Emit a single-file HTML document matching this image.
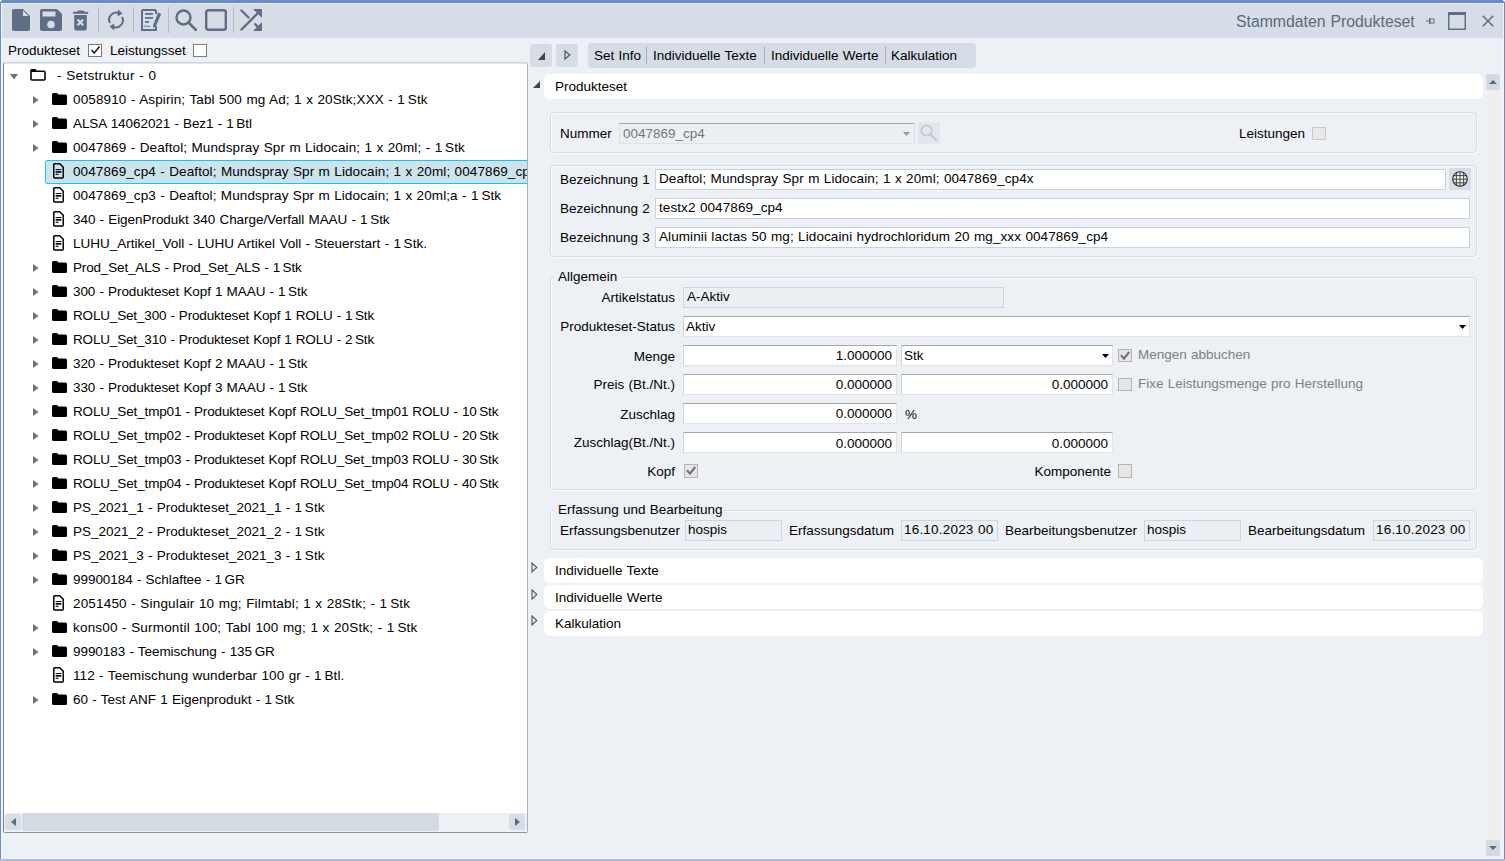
<!DOCTYPE html><html><head><meta charset='utf-8'><style>
*{box-sizing:border-box}
html,body{margin:0;padding:0}
body{width:1505px;height:861px;overflow:hidden;position:relative;background:#edf0f5;font-family:"Liberation Sans", sans-serif;font-size:13.5px;letter-spacing:0;word-spacing:.5px;color:#000}
.a{position:absolute}
.t{position:absolute;white-space:pre;line-height:16px;margin-top:1px}
.ic{position:absolute;display:block}
.inp{position:absolute;background:#fff;border:1px solid #c6d2e0}
.dis{background:#ebeef3;border:1px solid #c9d5e4}
.sunk{border-top-color:#a6a6a6;border-left-color:#c8d0c8;border-right-color:#dfe5ea;border-bottom-color:#dfe5ea}
.grp{position:absolute;border:1px solid #d3dde8;border-radius:4px;box-shadow:inset 1px 1px 0 #fafbfd,1px 1px 0 #fafbfd}
.sec{position:absolute;background:#fff;border-radius:6px}
.cb{position:absolute;width:14px;height:14px;border:1px solid #7a7a7a;background:#fff}
.cbd{position:absolute;width:14px;height:14px;border:1px solid #c8c8c8;background:#e8e8e8}
</style></head><body><div class='a' style='left:0;top:0;width:1505px;height:3px;background:#6a8cc4'></div><div class='a' style='left:0;top:0;width:1px;height:861px;background:#6a8cc4'></div><div class='a' style='left:1504px;top:0;width:1px;height:861px;background:#6a8cc4'></div><div class='a' style='left:0;top:859px;width:1505px;height:2px;background:#a9bcd8'></div><div class='a' style='left:1px;top:3px;width:1503px;height:1px;background:#e4e9ef'></div><div class='a' style='left:1px;top:3px;width:1px;height:856px;background:#f4f6f9'></div><div class='a' style='left:1503px;top:3px;width:1px;height:856px;background:#f4f6f9'></div><div class='a' style='left:0;top:0;width:2px;height:1px;background:#fff'></div><div class='a' style='left:0;top:1px;width:1px;height:1px;background:#c9d6ea'></div><div class='a' style='left:1503px;top:0;width:2px;height:1px;background:#fff'></div><div class='a' style='left:1504px;top:1px;width:1px;height:1px;background:#c9d6ea'></div><div class='a' style='left:2px;top:4px;width:1501px;height:34px;background:#d6dde6'></div><svg class='ic' style='left:12px;top:9px' width='18' height='22' viewBox='0 0 18 22'><path d='M2 0 H11 L18 7 V20 A2 2 0 0 1 16 22 H2 A2 2 0 0 1 0 20 V2 A2 2 0 0 1 2 0Z' fill='#5e6e84'/><path d='M11 1.5 V7 H16.5Z' fill='#d6dde6'/></svg><svg class='ic' style='left:40px;top:9px' width='22' height='22' viewBox='0 0 22 22'><path d='M2 0 H17 L22 5 V20 A2 2 0 0 1 20 22 H2 A2 2 0 0 1 0 20 V2 A2 2 0 0 1 2 0Z' fill='#5e6e84'/><rect x='2.5' y='2.5' width='13' height='5' fill='#d6dde6'/><circle cx='11' cy='15.5' r='3.8' fill='#d6dde6'/></svg><svg class='ic' style='left:73px;top:10px' width='16' height='21' viewBox='0 0 16 21'><rect x='0' y='1.8' width='15.2' height='2' fill='#5e6e84'/><rect x='4.2' y='0.6' width='7' height='2' rx='1' fill='#5e6e84'/><path d='M1.2 5 H13.8 V18.5 A2 2 0 0 1 11.8 20.5 H3.2 A2 2 0 0 1 1.2 18.5Z' fill='#5e6e84'/><path d='M4.6 9.5 L10.2 15.2 M10.2 9.5 L4.6 15.2' stroke='#d6dde6' stroke-width='2'/></svg><div class='a' style='left:98px;top:7px;width:1px;height:26px;background:#b4bcc6'></div><div class='a' style='left:133px;top:7px;width:1px;height:26px;background:#b4bcc6'></div><div class='a' style='left:168px;top:7px;width:1px;height:26px;background:#b4bcc6'></div><div class='a' style='left:233px;top:7px;width:1px;height:26px;background:#b4bcc6'></div><svg class='ic' style='left:107px;top:9px' width='18' height='22' viewBox='0 0 18 22'><path d='M3 14 A7 7 0 0 1 12.5 4.5' fill='none' stroke='#5e6e84' stroke-width='2'/><path d='M15 8 A7 7 0 0 1 5.5 17.5' fill='none' stroke='#5e6e84' stroke-width='2'/><path d='M11 0.5 L15.5 4.5 L10.5 7.5Z' fill='#5e6e84'/><path d='M7 14.5 L2.5 17.5 L7.5 21.5Z' fill='#5e6e84'/></svg><svg class='ic' style='left:141px;top:9px' width='20' height='22' viewBox='0 0 20 22'><path d='M1 1 H15 M1 1 V21 H15 V17' fill='none' stroke='#5e6e84' stroke-width='2'/><path d='M15 1 V5' stroke='#5e6e84' stroke-width='2'/><rect x='4' y='4' width='8' height='1.8' fill='#5e6e84'/><rect x='4' y='8' width='8' height='1.8' fill='#5e6e84'/><rect x='4' y='12' width='4' height='1.8' fill='#5e6e84'/><path d='M17.2 3.5 L20.2 5 L14.8 17.2 L12 19 L12.2 15.8Z' fill='#5e6e84'/><path d='M3 18 C5 15 6 19 9 17' fill='none' stroke='#5e6e84' stroke-width='1'/></svg><svg class='ic' style='left:175px;top:9px' width='22' height='22' viewBox='0 0 22 22'><circle cx='8.5' cy='8.5' r='7' fill='none' stroke='#5e6e84' stroke-width='2.4'/><path d='M13.5 13.5 L21 21' stroke='#5e6e84' stroke-width='2.6' stroke-linecap='round'/></svg><svg class='ic' style='left:205px;top:9px' width='22' height='22' viewBox='0 0 22 22'><rect x='1.2' y='1.2' width='19.6' height='19.6' rx='2' fill='none' stroke='#5e6e84' stroke-width='2.4'/></svg><svg class='ic' style='left:240px;top:9px' width='23' height='22' viewBox='0 0 23 22'><path d='M1.5 1.5 L8.5 8.5' stroke='#5e6e84' stroke-width='2.4' stroke-linecap='round'/><path d='M1.5 20.5 L20 2' stroke='#5e6e84' stroke-width='2.4' stroke-linecap='round'/><path d='M14.5 14.5 L20 20' stroke='#5e6e84' stroke-width='2.4'/><path d='M13 0 H22 V9Z' fill='#5e6e84'/><path d='M22 13 V22 H13Z' fill='#5e6e84'/></svg><div class='t' style='left:1236px;top:11px;font-size:15.8px;letter-spacing:0;color:#5b6a80;line-height:20px'>Stammdaten Produkteset</div><svg class='ic' style='left:1426px;top:17px' width='9' height='8' viewBox='0 0 9 8'><rect x='0' y='3.5' width='3' height='1' fill='#5e6e84'/><rect x='3' y='1' width='1.2' height='6' fill='#5e6e84'/><rect x='4' y='2' width='4' height='4' fill='none' stroke='#5e6e84' stroke-width='1'/></svg><svg class='ic' style='left:1448px;top:12px' width='19' height='18' viewBox='0 0 19 18'><rect x='0.75' y='0.75' width='16.5' height='16.5' fill='none' stroke='#5e6e84' stroke-width='1.5'/><rect x='0' y='0' width='18' height='3' fill='#5e6e84'/></svg><svg class='ic' style='left:1482px;top:15px' width='12' height='12' viewBox='0 0 12 12'><path d='M0.8 0.8 L11.2 11.2 M11.2 0.8 L0.8 11.2' stroke='#5e6e84' stroke-width='1.6'/></svg><div class='t' style='left:8px;top:42px'>Produkteset</div><div class='cb' style='left:88px;top:44px;height:13px'></div><svg class='ic' style='left:90px;top:45px' width='11' height='10' viewBox='0 0 11 10'><path d='M1.5 5 L4.2 8 L9.5 1.5' fill='none' stroke='#222' stroke-width='1.6'/></svg><div class='t' style='left:110px;top:42px'>Leistungsset</div><div class='cb' style='left:193px;top:44px;height:13px'></div><div class='a' style='left:3px;top:62px;width:525px;height:771px;background:#fff;border:1px solid #8797a6;border-top-color:#ccd4dd;border-left-color:#74879a;border-right-color:#a3b0bd;border-radius:2px;overflow:hidden'><div class='a' style='left:0;top:0;width:523px;height:1px;background:#dfe5eb'></div><svg class='ic' style='left:6px;top:11px' width='8' height='6' viewBox='0 0 8 6'><path d='M0 0 H8 L4 5.5Z' fill='#707070'/></svg><svg class='ic' style='left:26px;top:6px' width='16' height='12' viewBox='0 0 16 12'><path d='M1.5 0.9 H5 L6.3 2.2 H14 A1 1 0 0 1 15 3.2 V10 A1 1 0 0 1 14 11 H2 A1 1 0 0 1 1 10 V1.5Z' fill='none' stroke='#000' stroke-width='1.6'/><rect x='1' y='0.5' width='5' height='2.5' fill='#000'/></svg><div class='t' style='left:53px;top:4px;letter-spacing:.28px'>- Setstruktur - 0</div><svg class='ic' style='left:29px;top:33px' width='6' height='8' viewBox='0 0 6 8'><path d='M0 0 L5.5 4 L0 8Z' fill='#707070'/></svg><svg class='ic' style='left:47.5px;top:30px' width='15' height='12' viewBox='0 0 15 12'><path d='M1.5 0 H5 L6.5 1.5 H13.5 A1.5 1.5 0 0 1 15 3 V10.5 A1.5 1.5 0 0 1 13.5 12 H1.5 A1.5 1.5 0 0 1 0 10.5 V1.5 A1.5 1.5 0 0 1 1.5 0Z' fill='#000'/></svg><div class='t' style='left:69px;top:28px;letter-spacing:0.135px'>0058910 - Aspirin; Tabl 500 mg Ad; 1 x 20Stk;XXX - 1 Stk</div><svg class='ic' style='left:29px;top:57px' width='6' height='8' viewBox='0 0 6 8'><path d='M0 0 L5.5 4 L0 8Z' fill='#707070'/></svg><svg class='ic' style='left:47.5px;top:54px' width='15' height='12' viewBox='0 0 15 12'><path d='M1.5 0 H5 L6.5 1.5 H13.5 A1.5 1.5 0 0 1 15 3 V10.5 A1.5 1.5 0 0 1 13.5 12 H1.5 A1.5 1.5 0 0 1 0 10.5 V1.5 A1.5 1.5 0 0 1 1.5 0Z' fill='#000'/></svg><div class='t' style='left:69px;top:52px;letter-spacing:-0.069px'>ALSA 14062021 - Bez1 - 1 Btl</div><svg class='ic' style='left:29px;top:81px' width='6' height='8' viewBox='0 0 6 8'><path d='M0 0 L5.5 4 L0 8Z' fill='#707070'/></svg><svg class='ic' style='left:47.5px;top:78px' width='15' height='12' viewBox='0 0 15 12'><path d='M1.5 0 H5 L6.5 1.5 H13.5 A1.5 1.5 0 0 1 15 3 V10.5 A1.5 1.5 0 0 1 13.5 12 H1.5 A1.5 1.5 0 0 1 0 10.5 V1.5 A1.5 1.5 0 0 1 1.5 0Z' fill='#000'/></svg><div class='t' style='left:69px;top:76px;letter-spacing:0.114px'>0047869 - Deaftol; Mundspray Spr m Lidocain; 1 x 20ml; - 1 Stk</div><div class='a' style='left:41px;top:97px;width:500px;height:24px;background:#cce3ec;border:1px solid #12c6f5;border-radius:2px'></div><svg class='ic' style='left:49px;top:100px' width='11' height='16' viewBox='0 0 11 16'><path d='M0.75 1.6 Q0.75 0.75 1.6 0.75 H6.8 L10.25 4.2 V14.1 Q10.25 14.95 9.4 14.95 H1.6 Q0.75 14.95 0.75 14.1 Z' fill='none' stroke='#000' stroke-width='1.5'/><rect x='2.6' y='6.1' width='5.8' height='1' fill='#000'/><rect x='2.6' y='8.1' width='5.8' height='1.6' fill='#000'/><rect x='2.6' y='10.7' width='3' height='1.1' fill='#000'/></svg><div class='t' style='left:69px;top:100px;letter-spacing:0.1px'>0047869_cp4 - Deaftol; Mundspray Spr m Lidocain; 1 x 20ml; 0047869_cp4x - 1 Stk</div><svg class='ic' style='left:49px;top:124px' width='11' height='16' viewBox='0 0 11 16'><path d='M0.75 1.6 Q0.75 0.75 1.6 0.75 H6.8 L10.25 4.2 V14.1 Q10.25 14.95 9.4 14.95 H1.6 Q0.75 14.95 0.75 14.1 Z' fill='none' stroke='#000' stroke-width='1.5'/><rect x='2.6' y='6.1' width='5.8' height='1' fill='#000'/><rect x='2.6' y='8.1' width='5.8' height='1.6' fill='#000'/><rect x='2.6' y='10.7' width='3' height='1.1' fill='#000'/></svg><div class='t' style='left:69px;top:124px;letter-spacing:0.097px'>0047869_cp3 - Deaftol; Mundspray Spr m Lidocain; 1 x 20ml;a - 1 Stk</div><svg class='ic' style='left:49px;top:148px' width='11' height='16' viewBox='0 0 11 16'><path d='M0.75 1.6 Q0.75 0.75 1.6 0.75 H6.8 L10.25 4.2 V14.1 Q10.25 14.95 9.4 14.95 H1.6 Q0.75 14.95 0.75 14.1 Z' fill='none' stroke='#000' stroke-width='1.5'/><rect x='2.6' y='6.1' width='5.8' height='1' fill='#000'/><rect x='2.6' y='8.1' width='5.8' height='1.6' fill='#000'/><rect x='2.6' y='10.7' width='3' height='1.1' fill='#000'/></svg><div class='t' style='left:69px;top:148px;letter-spacing:-0.051px'>340 - EigenProdukt 340 Charge/Verfall MAAU - 1 Stk</div><svg class='ic' style='left:49px;top:172px' width='11' height='16' viewBox='0 0 11 16'><path d='M0.75 1.6 Q0.75 0.75 1.6 0.75 H6.8 L10.25 4.2 V14.1 Q10.25 14.95 9.4 14.95 H1.6 Q0.75 14.95 0.75 14.1 Z' fill='none' stroke='#000' stroke-width='1.5'/><rect x='2.6' y='6.1' width='5.8' height='1' fill='#000'/><rect x='2.6' y='8.1' width='5.8' height='1.6' fill='#000'/><rect x='2.6' y='10.7' width='3' height='1.1' fill='#000'/></svg><div class='t' style='left:69px;top:172px;letter-spacing:0.01px'>LUHU_Artikel_Voll - LUHU Artikel Voll - Steuerstart - 1 Stk.</div><svg class='ic' style='left:29px;top:201px' width='6' height='8' viewBox='0 0 6 8'><path d='M0 0 L5.5 4 L0 8Z' fill='#707070'/></svg><svg class='ic' style='left:47.5px;top:198px' width='15' height='12' viewBox='0 0 15 12'><path d='M1.5 0 H5 L6.5 1.5 H13.5 A1.5 1.5 0 0 1 15 3 V10.5 A1.5 1.5 0 0 1 13.5 12 H1.5 A1.5 1.5 0 0 1 0 10.5 V1.5 A1.5 1.5 0 0 1 1.5 0Z' fill='#000'/></svg><div class='t' style='left:69px;top:196px;letter-spacing:-0.164px'>Prod_Set_ALS - Prod_Set_ALS - 1 Stk</div><svg class='ic' style='left:29px;top:225px' width='6' height='8' viewBox='0 0 6 8'><path d='M0 0 L5.5 4 L0 8Z' fill='#707070'/></svg><svg class='ic' style='left:47.5px;top:222px' width='15' height='12' viewBox='0 0 15 12'><path d='M1.5 0 H5 L6.5 1.5 H13.5 A1.5 1.5 0 0 1 15 3 V10.5 A1.5 1.5 0 0 1 13.5 12 H1.5 A1.5 1.5 0 0 1 0 10.5 V1.5 A1.5 1.5 0 0 1 1.5 0Z' fill='#000'/></svg><div class='t' style='left:69px;top:220px;letter-spacing:-0.079px'>300 - Produkteset Kopf 1 MAAU - 1 Stk</div><svg class='ic' style='left:29px;top:249px' width='6' height='8' viewBox='0 0 6 8'><path d='M0 0 L5.5 4 L0 8Z' fill='#707070'/></svg><svg class='ic' style='left:47.5px;top:246px' width='15' height='12' viewBox='0 0 15 12'><path d='M1.5 0 H5 L6.5 1.5 H13.5 A1.5 1.5 0 0 1 15 3 V10.5 A1.5 1.5 0 0 1 13.5 12 H1.5 A1.5 1.5 0 0 1 0 10.5 V1.5 A1.5 1.5 0 0 1 1.5 0Z' fill='#000'/></svg><div class='t' style='left:69px;top:244px;letter-spacing:-0.165px'>ROLU_Set_300 - Produkteset Kopf 1 ROLU - 1 Stk</div><svg class='ic' style='left:29px;top:273px' width='6' height='8' viewBox='0 0 6 8'><path d='M0 0 L5.5 4 L0 8Z' fill='#707070'/></svg><svg class='ic' style='left:47.5px;top:270px' width='15' height='12' viewBox='0 0 15 12'><path d='M1.5 0 H5 L6.5 1.5 H13.5 A1.5 1.5 0 0 1 15 3 V10.5 A1.5 1.5 0 0 1 13.5 12 H1.5 A1.5 1.5 0 0 1 0 10.5 V1.5 A1.5 1.5 0 0 1 1.5 0Z' fill='#000'/></svg><div class='t' style='left:69px;top:268px;letter-spacing:-0.165px'>ROLU_Set_310 - Produkteset Kopf 1 ROLU - 2 Stk</div><svg class='ic' style='left:29px;top:297px' width='6' height='8' viewBox='0 0 6 8'><path d='M0 0 L5.5 4 L0 8Z' fill='#707070'/></svg><svg class='ic' style='left:47.5px;top:294px' width='15' height='12' viewBox='0 0 15 12'><path d='M1.5 0 H5 L6.5 1.5 H13.5 A1.5 1.5 0 0 1 15 3 V10.5 A1.5 1.5 0 0 1 13.5 12 H1.5 A1.5 1.5 0 0 1 0 10.5 V1.5 A1.5 1.5 0 0 1 1.5 0Z' fill='#000'/></svg><div class='t' style='left:69px;top:292px;letter-spacing:-0.079px'>320 - Produkteset Kopf 2 MAAU - 1 Stk</div><svg class='ic' style='left:29px;top:321px' width='6' height='8' viewBox='0 0 6 8'><path d='M0 0 L5.5 4 L0 8Z' fill='#707070'/></svg><svg class='ic' style='left:47.5px;top:318px' width='15' height='12' viewBox='0 0 15 12'><path d='M1.5 0 H5 L6.5 1.5 H13.5 A1.5 1.5 0 0 1 15 3 V10.5 A1.5 1.5 0 0 1 13.5 12 H1.5 A1.5 1.5 0 0 1 0 10.5 V1.5 A1.5 1.5 0 0 1 1.5 0Z' fill='#000'/></svg><div class='t' style='left:69px;top:316px;letter-spacing:-0.079px'>330 - Produkteset Kopf 3 MAAU - 1 Stk</div><svg class='ic' style='left:29px;top:345px' width='6' height='8' viewBox='0 0 6 8'><path d='M0 0 L5.5 4 L0 8Z' fill='#707070'/></svg><svg class='ic' style='left:47.5px;top:342px' width='15' height='12' viewBox='0 0 15 12'><path d='M1.5 0 H5 L6.5 1.5 H13.5 A1.5 1.5 0 0 1 15 3 V10.5 A1.5 1.5 0 0 1 13.5 12 H1.5 A1.5 1.5 0 0 1 0 10.5 V1.5 A1.5 1.5 0 0 1 1.5 0Z' fill='#000'/></svg><div class='t' style='left:69px;top:340px;letter-spacing:-0.139px'>ROLU_Set_tmp01 - Produkteset Kopf ROLU_Set_tmp01 ROLU - 10 Stk</div><svg class='ic' style='left:29px;top:369px' width='6' height='8' viewBox='0 0 6 8'><path d='M0 0 L5.5 4 L0 8Z' fill='#707070'/></svg><svg class='ic' style='left:47.5px;top:366px' width='15' height='12' viewBox='0 0 15 12'><path d='M1.5 0 H5 L6.5 1.5 H13.5 A1.5 1.5 0 0 1 15 3 V10.5 A1.5 1.5 0 0 1 13.5 12 H1.5 A1.5 1.5 0 0 1 0 10.5 V1.5 A1.5 1.5 0 0 1 1.5 0Z' fill='#000'/></svg><div class='t' style='left:69px;top:364px;letter-spacing:-0.139px'>ROLU_Set_tmp02 - Produkteset Kopf ROLU_Set_tmp02 ROLU - 20 Stk</div><svg class='ic' style='left:29px;top:393px' width='6' height='8' viewBox='0 0 6 8'><path d='M0 0 L5.5 4 L0 8Z' fill='#707070'/></svg><svg class='ic' style='left:47.5px;top:390px' width='15' height='12' viewBox='0 0 15 12'><path d='M1.5 0 H5 L6.5 1.5 H13.5 A1.5 1.5 0 0 1 15 3 V10.5 A1.5 1.5 0 0 1 13.5 12 H1.5 A1.5 1.5 0 0 1 0 10.5 V1.5 A1.5 1.5 0 0 1 1.5 0Z' fill='#000'/></svg><div class='t' style='left:69px;top:388px;letter-spacing:-0.139px'>ROLU_Set_tmp03 - Produkteset Kopf ROLU_Set_tmp03 ROLU - 30 Stk</div><svg class='ic' style='left:29px;top:417px' width='6' height='8' viewBox='0 0 6 8'><path d='M0 0 L5.5 4 L0 8Z' fill='#707070'/></svg><svg class='ic' style='left:47.5px;top:414px' width='15' height='12' viewBox='0 0 15 12'><path d='M1.5 0 H5 L6.5 1.5 H13.5 A1.5 1.5 0 0 1 15 3 V10.5 A1.5 1.5 0 0 1 13.5 12 H1.5 A1.5 1.5 0 0 1 0 10.5 V1.5 A1.5 1.5 0 0 1 1.5 0Z' fill='#000'/></svg><div class='t' style='left:69px;top:412px;letter-spacing:-0.139px'>ROLU_Set_tmp04 - Produkteset Kopf ROLU_Set_tmp04 ROLU - 40 Stk</div><svg class='ic' style='left:29px;top:441px' width='6' height='8' viewBox='0 0 6 8'><path d='M0 0 L5.5 4 L0 8Z' fill='#707070'/></svg><svg class='ic' style='left:47.5px;top:438px' width='15' height='12' viewBox='0 0 15 12'><path d='M1.5 0 H5 L6.5 1.5 H13.5 A1.5 1.5 0 0 1 15 3 V10.5 A1.5 1.5 0 0 1 13.5 12 H1.5 A1.5 1.5 0 0 1 0 10.5 V1.5 A1.5 1.5 0 0 1 1.5 0Z' fill='#000'/></svg><div class='t' style='left:69px;top:436px;letter-spacing:0.014px'>PS_2021_1 - Produkteset_2021_1 - 1 Stk</div><svg class='ic' style='left:29px;top:465px' width='6' height='8' viewBox='0 0 6 8'><path d='M0 0 L5.5 4 L0 8Z' fill='#707070'/></svg><svg class='ic' style='left:47.5px;top:462px' width='15' height='12' viewBox='0 0 15 12'><path d='M1.5 0 H5 L6.5 1.5 H13.5 A1.5 1.5 0 0 1 15 3 V10.5 A1.5 1.5 0 0 1 13.5 12 H1.5 A1.5 1.5 0 0 1 0 10.5 V1.5 A1.5 1.5 0 0 1 1.5 0Z' fill='#000'/></svg><div class='t' style='left:69px;top:460px;letter-spacing:0.014px'>PS_2021_2 - Produkteset_2021_2 - 1 Stk</div><svg class='ic' style='left:29px;top:489px' width='6' height='8' viewBox='0 0 6 8'><path d='M0 0 L5.5 4 L0 8Z' fill='#707070'/></svg><svg class='ic' style='left:47.5px;top:486px' width='15' height='12' viewBox='0 0 15 12'><path d='M1.5 0 H5 L6.5 1.5 H13.5 A1.5 1.5 0 0 1 15 3 V10.5 A1.5 1.5 0 0 1 13.5 12 H1.5 A1.5 1.5 0 0 1 0 10.5 V1.5 A1.5 1.5 0 0 1 1.5 0Z' fill='#000'/></svg><div class='t' style='left:69px;top:484px;letter-spacing:0.014px'>PS_2021_3 - Produkteset_2021_3 - 1 Stk</div><svg class='ic' style='left:29px;top:513px' width='6' height='8' viewBox='0 0 6 8'><path d='M0 0 L5.5 4 L0 8Z' fill='#707070'/></svg><svg class='ic' style='left:47.5px;top:510px' width='15' height='12' viewBox='0 0 15 12'><path d='M1.5 0 H5 L6.5 1.5 H13.5 A1.5 1.5 0 0 1 15 3 V10.5 A1.5 1.5 0 0 1 13.5 12 H1.5 A1.5 1.5 0 0 1 0 10.5 V1.5 A1.5 1.5 0 0 1 1.5 0Z' fill='#000'/></svg><div class='t' style='left:69px;top:508px;letter-spacing:-0.041px'>99900184 - Schlaftee - 1 GR</div><svg class='ic' style='left:49px;top:532px' width='11' height='16' viewBox='0 0 11 16'><path d='M0.75 1.6 Q0.75 0.75 1.6 0.75 H6.8 L10.25 4.2 V14.1 Q10.25 14.95 9.4 14.95 H1.6 Q0.75 14.95 0.75 14.1 Z' fill='none' stroke='#000' stroke-width='1.5'/><rect x='2.6' y='6.1' width='5.8' height='1' fill='#000'/><rect x='2.6' y='8.1' width='5.8' height='1.6' fill='#000'/><rect x='2.6' y='10.7' width='3' height='1.1' fill='#000'/></svg><div class='t' style='left:69px;top:532px;letter-spacing:0.179px'>2051450 - Singulair 10 mg; Filmtabl; 1 x 28Stk; - 1 Stk</div><svg class='ic' style='left:29px;top:561px' width='6' height='8' viewBox='0 0 6 8'><path d='M0 0 L5.5 4 L0 8Z' fill='#707070'/></svg><svg class='ic' style='left:47.5px;top:558px' width='15' height='12' viewBox='0 0 15 12'><path d='M1.5 0 H5 L6.5 1.5 H13.5 A1.5 1.5 0 0 1 15 3 V10.5 A1.5 1.5 0 0 1 13.5 12 H1.5 A1.5 1.5 0 0 1 0 10.5 V1.5 A1.5 1.5 0 0 1 1.5 0Z' fill='#000'/></svg><div class='t' style='left:69px;top:556px;letter-spacing:0.184px'>kons00 - Surmontil 100; Tabl 100 mg; 1 x 20Stk; - 1 Stk</div><svg class='ic' style='left:29px;top:585px' width='6' height='8' viewBox='0 0 6 8'><path d='M0 0 L5.5 4 L0 8Z' fill='#707070'/></svg><svg class='ic' style='left:47.5px;top:582px' width='15' height='12' viewBox='0 0 15 12'><path d='M1.5 0 H5 L6.5 1.5 H13.5 A1.5 1.5 0 0 1 15 3 V10.5 A1.5 1.5 0 0 1 13.5 12 H1.5 A1.5 1.5 0 0 1 0 10.5 V1.5 A1.5 1.5 0 0 1 1.5 0Z' fill='#000'/></svg><div class='t' style='left:69px;top:580px;letter-spacing:-0.051px'>9990183 - Teemischung - 135 GR</div><svg class='ic' style='left:49px;top:604px' width='11' height='16' viewBox='0 0 11 16'><path d='M0.75 1.6 Q0.75 0.75 1.6 0.75 H6.8 L10.25 4.2 V14.1 Q10.25 14.95 9.4 14.95 H1.6 Q0.75 14.95 0.75 14.1 Z' fill='none' stroke='#000' stroke-width='1.5'/><rect x='2.6' y='6.1' width='5.8' height='1' fill='#000'/><rect x='2.6' y='8.1' width='5.8' height='1.6' fill='#000'/><rect x='2.6' y='10.7' width='3' height='1.1' fill='#000'/></svg><div class='t' style='left:69px;top:604px;letter-spacing:0.086px'>112 - Teemischung wunderbar 100 gr - 1 Btl.</div><svg class='ic' style='left:29px;top:633px' width='6' height='8' viewBox='0 0 6 8'><path d='M0 0 L5.5 4 L0 8Z' fill='#707070'/></svg><svg class='ic' style='left:47.5px;top:630px' width='15' height='12' viewBox='0 0 15 12'><path d='M1.5 0 H5 L6.5 1.5 H13.5 A1.5 1.5 0 0 1 15 3 V10.5 A1.5 1.5 0 0 1 13.5 12 H1.5 A1.5 1.5 0 0 1 0 10.5 V1.5 A1.5 1.5 0 0 1 1.5 0Z' fill='#000'/></svg><div class='t' style='left:69px;top:628px;letter-spacing:-0.001px'>60 - Test ANF 1 Eigenprodukt - 1 Stk</div><div class='a' style='left:0px;top:750px;width:523px;height:19px;background:#edf0f5'></div><div class='a' style='left:1px;top:751px;width:16px;height:16px;background:#d8dee7;border-radius:2px'></div><svg class='ic' style='left:7px;top:755px' width='5' height='8' viewBox='0 0 5 8'><path d='M5 0 V8 L0 4Z' fill='#5c6b80'/></svg><div class='a' style='left:18px;top:750px;width:417px;height:18px;background:#d3dae4;border-radius:3px'></div><div class='a' style='left:505px;top:751px;width:16px;height:16px;background:#d8dee7;border-radius:2px'></div><svg class='ic' style='left:511px;top:755px' width='5' height='8' viewBox='0 0 5 8'><path d='M0 0 V8 L5 4Z' fill='#5c6b80'/></svg></div><div class='a' style='left:530px;top:44px;width:22px;height:23px;background:#d5dce5;border-radius:3px'></div><svg class='ic' style='left:538px;top:52px' width='7' height='8' viewBox='0 0 7 8'><path d='M7 0 V8 H0Z' fill='#444'/></svg><div class='a' style='left:556px;top:44px;width:22px;height:23px;background:#d5dce5;border-radius:3px'></div><svg class='ic' style='left:564px;top:50px' width='7' height='10' viewBox='0 0 7 10'><path d='M1 1 L5.8 5 L1 9Z' fill='none' stroke='#555' stroke-width='1.2'/></svg><div class='a' style='left:588px;top:43px;width:388px;height:25px;background:#d5dce5;border-radius:4px'></div><div class='a' style='left:646px;top:46px;width:1px;height:18px;background:#a9b1bb'></div><div class='a' style='left:764px;top:46px;width:1px;height:18px;background:#a9b1bb'></div><div class='a' style='left:885px;top:46px;width:1px;height:18px;background:#a9b1bb'></div><div class='t' style='left:594px;top:47px'>Set Info</div><div class='t' style='left:653px;top:47px'>Individuelle Texte</div><div class='t' style='left:771px;top:47px'>Individuelle Werte</div><div class='t' style='left:891px;top:47px'>Kalkulation</div><div class='a' style='left:1486px;top:74px;width:14px;height:782px;background:#efefef'></div><div class='a' style='left:1486px;top:74px;width:14px;height:16px;background:#d3dae4;border-radius:2px'></div><svg class='ic' style='left:1489px;top:80px' width='8' height='4' viewBox='0 0 8 4'><path d='M0 4 L4 0 L8 4Z' fill='#5a6a80'/></svg><div class='a' style='left:1486px;top:840px;width:14px;height:16px;background:#d3dae4;border-radius:2px'></div><svg class='ic' style='left:1489px;top:846px' width='8' height='4' viewBox='0 0 8 4'><path d='M0 0 L8 0 L4 4Z' fill='#5a6a80'/></svg><div class='sec' style='left:544px;top:74px;width:939px;height:25px'></div><div class='t' style='left:555px;top:78px'>Produkteset</div><svg class='ic' style='left:533px;top:81px' width='7' height='7' viewBox='0 0 7 7'><path d='M7 0 V7 H0Z' fill='#444'/></svg><div class='grp' style='left:550px;top:112px;width:927px;height:41px'></div><div class='t' style='left:560px;top:125px'>Nummer</div><div class='a' style='left:619px;top:123px;width:296px;height:21px;background:#eceff3;border:1px solid #dde2e7;border-top-color:#a3a3a3'></div><div class='t' style='left:623px;top:125px;color:#767676'>0047869_cp4</div><svg class='ic' style='left:903px;top:132px' width='7' height='4' viewBox='0 0 7 4'><path d='M0 0 H7 L3.5 4Z' fill='#999'/></svg><div class='a' style='left:918px;top:122px;width:22px;height:22px;background:#e3e7ed'></div><svg class='ic' style='left:920px;top:124px' width='18' height='19' viewBox='0 0 18 19'><circle cx='6.5' cy='6.5' r='5.2' fill='none' stroke='#c2c9d2' stroke-width='1.8'/><path d='M10.3 10.3 L16.5 16.5' stroke='#c2c9d2' stroke-width='2' stroke-linecap='round'/></svg><div class='t' style='left:1239px;top:125px'>Leistungen</div><div class='cbd' style='left:1312px;top:127px;width:14px;height:13px'></div><div class='grp' style='left:550px;top:165px;width:927px;height:92px'></div><div class='t' style='left:560px;top:171px'>Bezeichnung 1</div><div class='inp' style='left:655px;top:169px;width:791px;height:21px'></div><div class='t' style='left:659px;top:170px;letter-spacing:.09px'>Deaftol; Mundspray Spr m Lidocain; 1 x 20ml; 0047869_cp4x</div><div class='t' style='left:560px;top:200px'>Bezeichnung 2</div><div class='inp' style='left:655px;top:198px;width:815px;height:21px'></div><div class='t' style='left:659px;top:199px;letter-spacing:.09px'>testx2 0047869_cp4</div><div class='t' style='left:560px;top:229px'>Bezeichnung 3</div><div class='inp' style='left:655px;top:227px;width:815px;height:21px'></div><div class='t' style='left:659px;top:228px;letter-spacing:.09px'>Aluminii lactas 50 mg; Lidocaini hydrochloridum 20 mg_xxx 0047869_cp4</div><div class='a' style='left:1449px;top:168px;width:22px;height:22px;background:#d5dce5'></div><svg class='ic' style='left:1452px;top:171px' width='16' height='16' viewBox='0 0 16 16'><defs><radialGradient id='gg' cx='.5' cy='.45' r='.6'><stop offset='0' stop-color='#fff'/><stop offset='.75' stop-color='#e0e0e0'/><stop offset='1' stop-color='#8a8a8a'/></radialGradient></defs><circle cx='8' cy='8' r='7.4' fill='url(#gg)'/><g stroke='#404040' stroke-width='.95' fill='none'><path d='M1.2 4.6 H14.8 M.7 8.2 H15.3 M1.2 11.8 H14.8 M4.4 1.2 V14.8 M8 .7 V15.3 M11.6 1.2 V14.8'/></g><circle cx='8' cy='8' r='7.3' fill='none' stroke='#333' stroke-width='1.1'/></svg><div class='grp' style='left:550px;top:277px;width:927px;height:213px'></div><div class='a' style='left:554px;top:270px;width:68px;height:12px;background:#edf0f5'></div><div class='t' style='left:558px;top:268px'>Allgemein</div><div class='t' style='left:375px;width:300px;text-align:right;top:289px;color:#000'>Artikelstatus</div><div class='a dis' style='left:683px;top:287px;width:321px;height:21px'></div><div class='t' style='left:687px;top:288px'>A-Aktiv</div><div class='t' style='left:375px;width:300px;text-align:right;top:318px;color:#000'>Produkteset-Status</div><div class='a' style='left:683px;top:316px;width:787px;height:21px;background:#fff;border:1px solid #dfe5ea;border-top-color:#a6a6a6;border-left-color:#cfd6cf'></div><div class='t' style='left:686px;top:318px'>Aktiv</div><svg class='ic' style='left:1459px;top:325px' width='7' height='4' viewBox='0 0 7 4'><path d='M0 0 H7 L3.5 4Z' fill='#000'/></svg><div class='t' style='left:375px;width:300px;text-align:right;top:348px;color:#000'>Menge</div><div class='a' style='left:683px;top:345px;width:214px;height:21px;background:#fff;border:1px solid #dfe5ea;border-top-color:#a6a6a6;border-left-color:#cfd6cf'></div><div class='t' style='left:683px;width:209px;text-align:right;top:347px'>1.000000</div><div class='a' style='left:901px;top:345px;width:212px;height:21px;background:#fff;border:1px solid #dfe5ea;border-top-color:#a6a6a6;border-left-color:#cfd6cf'></div><div class='t' style='left:904px;top:347px'>Stk</div><svg class='ic' style='left:1102px;top:354px' width='7' height='4' viewBox='0 0 7 4'><path d='M0 0 H7 L3.5 4Z' fill='#000'/></svg><div class='a' style='left:1118px;top:349px;width:14px;height:13px;background:#e6e6e6;border:1px solid #b4b4b4'></div><svg class='ic' style='left:1120px;top:351px' width='10' height='9' viewBox='0 0 10 9'><path d='M1 4.3 L4 7.6 L9.2 1' fill='none' stroke='#707070' stroke-width='2.1'/></svg><div class='t' style='left:1138px;top:346px;color:#808080'>Mengen abbuchen</div><div class='t' style='left:375px;width:300px;text-align:right;top:376px;color:#000'>Preis (Bt./Nt.)</div><div class='a' style='left:683px;top:374px;width:214px;height:21px;background:#fff;border:1px solid #dfe5ea;border-top-color:#a6a6a6;border-left-color:#cfd6cf'></div><div class='t' style='left:683px;width:209px;text-align:right;top:376px'>0.000000</div><div class='a' style='left:901px;top:374px;width:212px;height:21px;background:#fff;border:1px solid #dfe5ea;border-top-color:#a6a6a6;border-left-color:#cfd6cf'></div><div class='t' style='left:901px;width:207px;text-align:right;top:376px'>0.000000</div><div class='a' style='left:1118px;top:378px;width:14px;height:13px;background:#e6e6e6;border:1px solid #b4b4b4'></div><div class='t' style='left:1138px;top:375px;color:#808080'>Fixe Leistungsmenge pro Herstellung</div><div class='t' style='left:375px;width:300px;text-align:right;top:406px;color:#000'>Zuschlag</div><div class='a' style='left:683px;top:403px;width:214px;height:21px;background:#fff;border:1px solid #dfe5ea;border-top-color:#a6a6a6;border-left-color:#cfd6cf'></div><div class='t' style='left:683px;width:209px;text-align:right;top:405px'>0.000000</div><div class='t' style='left:905px;top:406px'>%</div><div class='t' style='left:375px;width:300px;text-align:right;top:434px;color:#000'>Zuschlag(Bt./Nt.)</div><div class='a' style='left:683px;top:432px;width:214px;height:21px;background:#fff;border:1px solid #dfe5ea;border-top-color:#a6a6a6;border-left-color:#cfd6cf'></div><div class='t' style='left:683px;width:209px;text-align:right;top:435px'>0.000000</div><div class='a' style='left:901px;top:432px;width:212px;height:21px;background:#fff;border:1px solid #dfe5ea;border-top-color:#a6a6a6;border-left-color:#cfd6cf'></div><div class='t' style='left:901px;width:207px;text-align:right;top:435px'>0.000000</div><div class='t' style='left:375px;width:300px;text-align:right;top:463px;color:#000'>Kopf</div><div class='a' style='left:684px;top:464px;width:14px;height:14px;background:#e6e6e6;border:1px solid #b4b4b4'></div><svg class='ic' style='left:686px;top:466px' width='10' height='9' viewBox='0 0 10 9'><path d='M1 4.3 L4 7.6 L9.2 1' fill='none' stroke='#707070' stroke-width='2.1'/></svg><div class='t' style='left:811px;width:300px;text-align:right;top:463px;color:#000'>Komponente</div><div class='a' style='left:1118px;top:464px;width:14px;height:14px;background:#e6e6e6;border:1px solid #b4b4b4'></div><div class='grp' style='left:550px;top:510px;width:927px;height:40px'></div><div class='a' style='left:554px;top:503px;width:170px;height:12px;background:#edf0f5'></div><div class='t' style='left:558px;top:501px'>Erfassung und Bearbeitung</div><div class='t' style='left:560px;top:522px'>Erfassungsbenutzer</div><div class='a dis' style='left:685px;top:520px;width:97px;height:21px'></div><div class='t' style='left:688px;top:521px;letter-spacing:0'>hospis</div><div class='t' style='left:789px;top:522px'>Erfassungsdatum</div><div class='a dis' style='left:901px;top:520px;width:97px;height:21px'></div><div class='t' style='left:904px;top:521px;letter-spacing:.2px'>16.10.2023 00</div><div class='t' style='left:1005px;top:522px'>Bearbeitungsbenutzer</div><div class='a dis' style='left:1144px;top:520px;width:97px;height:21px'></div><div class='t' style='left:1147px;top:521px;letter-spacing:0'>hospis</div><div class='t' style='left:1248px;top:522px'>Bearbeitungsdatum</div><div class='a dis' style='left:1373px;top:520px;width:97px;height:21px'></div><div class='t' style='left:1376px;top:521px;letter-spacing:.2px'>16.10.2023 00</div><div class='sec' style='left:544px;top:558px;width:939px;height:25px'></div><div class='t' style='left:555px;top:562px'>Individuelle Texte</div><svg class='ic' style='left:531px;top:562px' width='7' height='11' viewBox='0 0 7 11'><path d='M1 1 L5.8 5.5 L1 10Z' fill='none' stroke='#555' stroke-width='1.1'/></svg><div class='sec' style='left:544px;top:585px;width:939px;height:24px'></div><div class='t' style='left:555px;top:589px'>Individuelle Werte</div><svg class='ic' style='left:531px;top:589px' width='7' height='11' viewBox='0 0 7 11'><path d='M1 1 L5.8 5.5 L1 10Z' fill='none' stroke='#555' stroke-width='1.1'/></svg><div class='sec' style='left:544px;top:611px;width:939px;height:25px'></div><div class='t' style='left:555px;top:615px'>Kalkulation</div><svg class='ic' style='left:531px;top:615px' width='7' height='11' viewBox='0 0 7 11'><path d='M1 1 L5.8 5.5 L1 10Z' fill='none' stroke='#555' stroke-width='1.1'/></svg></body></html>
